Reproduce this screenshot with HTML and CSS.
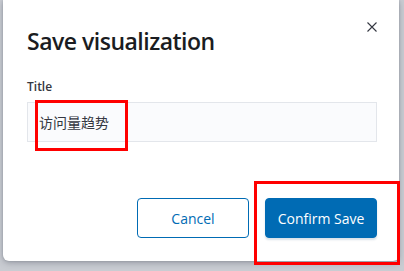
FILE: index.html
```html
<!DOCTYPE html>
<html>
<head>
<meta charset="utf-8">
<link rel="stylesheet" href="styles.css">
</head>
<body>
<div class="modal">
  <div class="header">
    <h1 class="title">Save visualization</h1>
    <button class="close" aria-label="Close">
      <svg width="10" height="10" viewBox="0 0 10 10"><path d="M0.5 0.5 L9.5 9.5 M9.5 0.5 L0.5 9.5" stroke="#343741" stroke-width="1.1" fill="none"/></svg>
    </button>
  </div>
  <div class="field">
    <label class="label">Title</label>
    <div class="input">访问量趋势</div>
  </div>
  <div class="footer">
    <button class="btn btn-empty">Cancel</button>
    <button class="btn btn-fill">Confirm Save</button>
  </div>
</div>
<div class="mark mark-a"></div>
<div class="mark mark-b"></div>
</body>
</html>
```
FILE: styles.css
```css
html, body {
  margin: 0;
  padding: 0;
}
body {
  width: 404px;
  height: 271px;
  overflow: hidden;
  background: #c9ccd2;
  font-family: "Open Sans", "Noto Sans", "Noto Sans CJK SC", sans-serif;
  color: #1a1c21;
  position: relative;
}
.modal {
  margin-left: 3px;
  width: 396px;
  height: 261px;
  box-sizing: border-box;
  padding: 25px 22px 0 24px;
  background: #fff;
  border-radius: 0 0 6px 6px;
  box-shadow: 0 2px 6px rgba(60, 65, 80, 0.35), 0 0 2px rgba(60,65,80,0.25);
  display: flex;
  flex-direction: column;
}
.header {
  display: flex;
  justify-content: space-between;
  align-items: flex-start;
  height: 32px;
}
.title {
  margin: 0;
  font-size: 23px;
  line-height: 32px;
  font-weight: 600;
  color: #1a1c21;
  letter-spacing: -0.5px;
}
.close {
  margin: -3px 0 0 0;
  padding: 0;
  border: none;
  background: none;
  width: 10px;
  height: 10px;
  display: flex;
}
.field {
  margin-top: 22px;
  display: flex;
  flex-direction: column;
}
.label {
  font-size: 12px;
  line-height: 16px;
  font-weight: 600;
  color: #343741;
}
.input {
  margin-top: 7px;
  height: 40px;
  box-sizing: border-box;
  border: 1px solid #e3e6eb;
  background: #fafbfd;
  padding: 0 12px 0 11px;
  display: flex;
  align-items: center;
  font-family: "Noto Sans CJK SC", sans-serif;
  font-size: 14px;
  color: #343741;
}
.footer {
  margin-top: 56px;
  display: flex;
  justify-content: flex-end;
  gap: 16px;
}
.btn {
  width: 112px;
  height: 40px;
  box-sizing: border-box;
  border-radius: 4px;
  font-family: "Open Sans", "Noto Sans", sans-serif;
  font-size: 14px;
  padding: 0;
}
.btn-empty {
  background: #fff;
  border: 1px solid #006bb4;
  color: #006bb4;
}
.btn-fill {
  background: #006bb4;
  border: 1px solid #006bb4;
  color: #fff;
  box-shadow: 0 2px 2px rgba(0, 60, 110, 0.15);
}
.mark {
  position: absolute;
  border: 3px solid #ff0000;
  box-sizing: border-box;
}
.mark-a {
  left: 35px;
  top: 100px;
  width: 93px;
  height: 51px;
}
.mark-b {
  left: 254px;
  top: 181px;
  width: 146px;
  height: 84px;
}
```
